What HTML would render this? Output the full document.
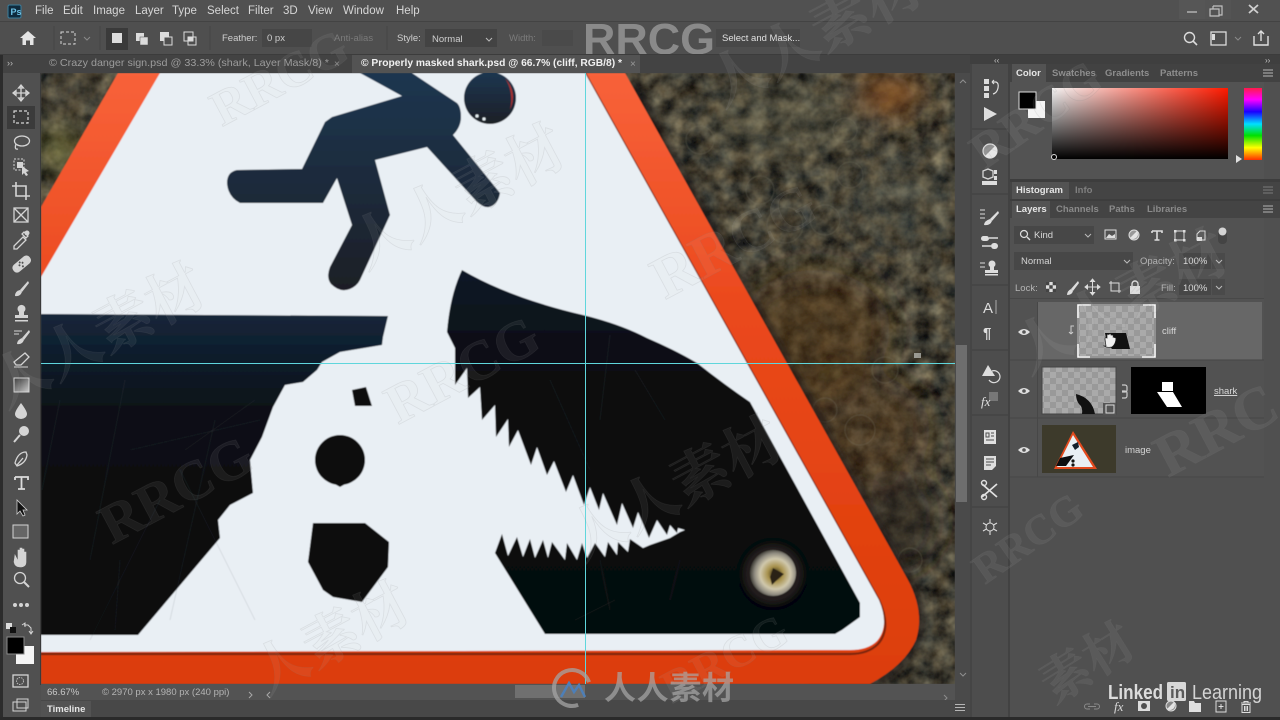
<!DOCTYPE html>
<html><head><meta charset="utf-8"><title>Photoshop</title>
<style>
html,body{margin:0;padding:0;background:#4f4f4f;width:1280px;height:720px;overflow:hidden}
svg{display:block}
text{font-family:"Liberation Sans","Noto Sans CJK SC",sans-serif}
.m{font-size:11.5px;fill:#d6d6d6}
.o{font-size:9.5px;fill:#cfcfcf}
.d{font-size:9.5px;fill:#7b7b7b}
.t{font-size:9.5px;fill:#9c9c9c}
.a{font-size:9.5px;fill:#e6e6e6;font-weight:bold}
.wm{font-family:"Liberation Serif","Noto Serif CJK SC",serif;font-weight:bold;fill:#dedede;fill-opacity:.07;stroke:#808080;stroke-opacity:.14;stroke-width:.8}
.ic{fill:none;stroke:#d4d4d4;stroke-width:1.3}
.f{fill:#d4d4d4}
</style></head><body>
<svg width="1280" height="720" viewBox="0 0 1280 720" xmlns="http://www.w3.org/2000/svg">
<defs>
<filter id="rust" x="0" y="0" width="100%" height="100%" color-interpolation-filters="sRGB">
<feTurbulence type="fractalNoise" baseFrequency=".06" numOctaves="4" seed="11"/>
<feColorMatrix values=".55 .2 0 0 -.1  .48 .24 0 0 -.1  .34 .24 0 0 -.08  0 0 0 0 1"/>
</filter>
<filter id="b8"><feGaussianBlur stdDeviation="14"/></filter>
<filter id="b3"><feGaussianBlur stdDeviation="3"/></filter>
<filter id="b04"><feGaussianBlur stdDeviation=".45"/></filter>
<linearGradient id="org" x1="0" y1="0" x2="0" y2="1"><stop offset="0" stop-color="#f8623a"/><stop offset=".4" stop-color="#ea481c"/><stop offset="1" stop-color="#dc3e08"/></linearGradient>
<linearGradient id="nav" x1="0" y1="0" x2="0" y2="1"><stop offset="0" stop-color="#1d3650"/><stop offset=".55" stop-color="#1a2a3a"/><stop offset="1" stop-color="#1a1f26"/></linearGradient>
<linearGradient id="clf" x1="0" y1="0" x2="0" y2="1"><stop offset="0" stop-color="#14263a"/><stop offset=".15" stop-color="#0f1c2a"/><stop offset=".32" stop-color="#0a0f14"/><stop offset="1" stop-color="#07070a"/></linearGradient>
<linearGradient id="shk" x1="0" y1="0" x2="0" y2="1"><stop offset="0" stop-color="#0f1a27"/><stop offset=".3" stop-color="#090b10"/><stop offset="1" stop-color="#060709"/></linearGradient>
<linearGradient id="hx" x1="0" y1="0" x2="1" y2="0"><stop offset="0" stop-color="#f4f4f4"/><stop offset="1" stop-color="#ff1a00"/></linearGradient>
<linearGradient id="vx" x1="0" y1="0" x2="0" y2="1"><stop offset="0" stop-color="#000" stop-opacity="0"/><stop offset="1" stop-color="#000"/></linearGradient>
<linearGradient id="hue" x1="0" y1="0" x2="0" y2="1"><stop offset="0" stop-color="#ff1a4a"/><stop offset=".16" stop-color="#ff00ff"/><stop offset=".33" stop-color="#1a00ff"/><stop offset=".5" stop-color="#00e0ff"/><stop offset=".66" stop-color="#00e000"/><stop offset=".83" stop-color="#ffff00"/><stop offset="1" stop-color="#ff3000"/></linearGradient>
<linearGradient id="gradt" x1="0" y1="0" x2="1" y2="1"><stop offset="0" stop-color="#333"/><stop offset="1" stop-color="#ccc"/></linearGradient>
<radialGradient id="bolt" cx=".55" cy=".52" r=".55"><stop offset="0" stop-color="#2e260c"/><stop offset=".3" stop-color="#a8924e"/><stop offset=".6" stop-color="#d0c8ad"/><stop offset=".82" stop-color="#8f8b80"/><stop offset="1" stop-color="#3e3c36"/></radialGradient>
<pattern id="chk" width="12" height="12" patternUnits="userSpaceOnUse"><rect width="12" height="12" fill="#aaa"/><rect width="6" height="6" fill="#999"/><rect x="6" y="6" width="6" height="6" fill="#999"/></pattern>
<clipPath id="cv"><rect x="41" y="73" width="914" height="611"/></clipPath>
</defs>

<!-- base -->
<rect width="1280" height="720" fill="#505050"/>

<!-- CANVAS -->
<g clip-path="url(#cv)">
<g filter="url(#b04)">
<rect x="41" y="73" width="914" height="611" fill="#474336"/>
<rect x="41" y="73" width="914" height="611" filter="url(#rust)"/>
<g filter="url(#b8)">
<ellipse cx="890" cy="95" rx="32" ry="20" fill="#8a4f1f" opacity=".85"/>
<ellipse cx="815" cy="330" rx="75" ry="60" fill="#54361a" opacity=".55"/>
<ellipse cx="850" cy="430" rx="80" ry="60" fill="#54361a" opacity=".45"/>
<ellipse cx="790" cy="120" rx="80" ry="40" fill="#6a6a58" opacity=".25"/>
<ellipse cx="900" cy="200" rx="50" ry="40" fill="#65675c" opacity=".25"/>
<ellipse cx="900" cy="520" rx="40" ry="50" fill="#2e2a22" opacity=".6"/>
<ellipse cx="60" cy="150" rx="18" ry="22" fill="#77743a" opacity=".8"/>
<ellipse cx="70" cy="90" rx="25" ry="14" fill="#5a5240" opacity=".6"/>
</g>
<g fill="none" stroke="#7b7866" stroke-width="1" opacity=".3">
<circle cx="785" cy="225" r="18"/><circle cx="825" cy="220" r="15"/><circle cx="760" cy="190" r="14"/><circle cx="850" cy="175" r="13"/><circle cx="700" cy="140" r="14"/><circle cx="860" cy="430" r="15"/><circle cx="885" cy="370" r="13"/><circle cx="825" cy="410" r="12"/><circle cx="910" cy="560" r="12"/><circle cx="845" cy="130" r="12"/>
</g>
<!-- sign shadow -->
<path d="M632,73 L915,580 Q932,612 922,640 Q910,668 875,690 L800,690 L900,600 L625,110Z" fill="#1a1712" opacity=".55" filter="url(#b3)"/>
<!-- orange -->
<path d="M625,73 L908,580 Q925,612 916,640 Q905,665 870,684 L41,684 L41,207 L118,73Z" fill="url(#org)"/>
<!-- inner dark edge -->
<path d="M585,73 L879,600 Q892,628 878,644 Q868,654 850,654 L41,654" fill="none" stroke="#3a1408" stroke-width="2.2" opacity=".6"/>
<!-- white -->
<path d="M160,73 L585,73 L879,600 Q890,626 877,641 Q868,650 850,650 L41,652 L41,277Z" fill="#e9eff4"/>
<!-- head -->
<circle cx="490" cy="98" r="26" fill="url(#nav)"/>
<path d="M505,78 Q518,92 510,110 Q514,92 505,78Z" fill="#a83030"/>
<circle cx="477" cy="116" r="1.6" fill="#e6eef2"/><circle cx="484" cy="119" r="1.6" fill="#e6eef2"/>
<!-- figure -->
<path d="M360,73 L402,96 L332,117 L325,122 L302,169 L237,170 Q227,172 227,183 Q228,197 240,203 L323,203 L337,178 L352,225 L330,267 Q326,278 331,284 Q340,293 350,289 Q357,286 360,280 L390,215 L375,160 L427,147 L477,202 Q484,208 489,207 Q498,205 500,193 L453,135 Q461,127 461,117 Q461,107 457,103 L412,73Z" fill="url(#nav)"/>
<!-- cliff -->
<path d="M41,314 L388,316 L383,337 L382,345 L340,352 L322,362 L317,370 L303,382 L285,385 L273,407 L262,437 L250,460 L253,493 L230,505 L218,520 L220,538 L138,635 L41,635Z" fill="url(#clf)"/>
<g stroke="#5a5f63" stroke-width=".5" fill="none" opacity=".3">
<path d="M60,400 L42,490M125,380 L90,560M130,450 L260,420M215,420 L170,620M160,500 L90,640M255,400 L185,450M180,470 L255,620M120,560 L115,630"/>
</g>
<!-- rocks -->
<path d="M352,390 L366,387 L372,406 L355,406Z" fill="#0a0a0c"/>
<circle cx="340" cy="460" r="25" fill="#0a0a0c"/><path d="M324,478 L340,487 L356,478Z" fill="#0a0a0c"/>
<path d="M313,523 L365,523 L389,542 L388,567 L362,602 L333,597 L323,590 L308,562Z" fill="#0a0a0c"/>
<!-- shark -->
<path d="M462,270 Q510,298 583,315 Q620,324 647,338 Q675,350 697,363 Q725,385 750,402 L860,603 L860,617 L842,630 L835,634 L545,634 L495,553 L502,534 L508,556 L517,537 L523,557 L530,539 L535,558 L543,540 L548,558 L552,542 L565,560 L567,543 L577,560 L582,543 L587,558 L595,543 L605,557 L608,542 L617,555 L618,542 L628,552 L630,539 L643,548 L650,545 L670,538 L680,532 L685,530 L678,528 L677,533 L670,525 L667,535 L657,520 L649,538 L638,512 L633,528 L622,503 L617,525 L603,493 L599,510 L590,487 L584,505 L573,475 L566,492 L554,461 L547,475 L537,447 L531,465 L518,430 L509,447 L508,419 L496,437 L495,405 L482,420 L480,387 L468,398 L467,368 L455,385 L455,348 L447,332 Q450,295 462,270Z" fill="url(#shk)"/>
<g stroke="#5a5f63" stroke-width=".5" fill="none" opacity=".3">
<path d="M635,370 L665,420M610,335 L600,420M550,380 L590,470M615,600 L575,620M680,560 L670,600M600,560 L610,610"/>
</g>
<!-- bolt -->
<circle cx="773" cy="574" r="30" fill="#25241f" opacity=".9" filter="url(#b3)"/>
<circle cx="773" cy="573" r="23" fill="url(#bolt)"/>
<path d="M773,568 L784,574 L776,581 L772,585 L770,577Z" fill="#2a2418"/>
</g>
<!-- guides -->
<path d="M585.5,73V684M41,363.5H955" stroke="#5fd6dc" stroke-width="1"/>
<rect x="914" y="353" width="7" height="5" fill="#d8dcd8" opacity=".6"/>
</g>

<!-- MENU BAR -->
<rect x="0" y="0" width="1280" height="21" fill="#515151"/>
<rect x="0" y="21" width="1280" height="1" fill="#434343"/>
<rect x="8" y="5" width="13" height="13" rx="1.5" fill="#0e2a3d" stroke="#3b7d9c"/>
<text x="10.5" y="15" style="font-size:9px;font-weight:bold;fill:#6cc3e8">Ps</text>
<text class="m" x="35" y="14">File</text><text class="m" x="63" y="14">Edit</text><text class="m" x="93" y="14">Image</text><text class="m" x="135" y="14">Layer</text><text class="m" x="172" y="14">Type</text><text class="m" x="207" y="14">Select</text><text class="m" x="248" y="14">Filter</text><text class="m" x="283" y="14">3D</text><text class="m" x="308" y="14">View</text><text class="m" x="343" y="14">Window</text><text class="m" x="396" y="14">Help</text>
<rect x="1179" y="0" width="26" height="19" fill="#565656"/><rect x="1205" y="0" width="26" height="19" fill="#545454"/>
<rect x="1187" y="11" width="10" height="2" fill="#9a9a9a"/>
<path d="M1213,6h9v9h-3M1213,6v3M1210,9h9v7h-9z" fill="none" stroke="#c0c0c0" stroke-width="1.2"/>
<path d="M1249,5 L1258,13M1258,5 L1249,13" stroke="#cfcfcf" stroke-width="1.8"/>

<!-- OPTIONS BAR -->
<rect x="0" y="22" width="1280" height="33" fill="#4f4f4f"/>
<path d="M28,31 L36,38 L33.5,38 L33.5,45 L30,45 L30,40.5 L26,40.5 L26,45 L22.5,45 L22.5,38 L20,38Z" fill="#e4e4e4"/>
<path d="M54,26v24M100,26v24" stroke="#444" stroke-width="1"/>
<rect x="61" y="32" width="14" height="12" fill="none" stroke="#d4d4d4" stroke-dasharray="3 2"/>
<path d="M84,37l3,3 3,-3" fill="none" stroke="#8a8a8a"/>
<rect x="106" y="28" width="22" height="22" fill="#3a3a3a"/>
<rect x="112" y="33" width="10" height="10" fill="#dcdcdc"/>
<rect x="136" y="33" width="8" height="8" fill="#dcdcdc"/><rect x="140" y="37" width="8" height="8" fill="#dcdcdc" stroke="#4f4f4f" stroke-width=".5"/>
<rect x="160" y="32" width="9" height="9" fill="#dcdcdc"/><rect x="164" y="37" width="8" height="8" fill="#4f4f4f" stroke="#dcdcdc"/>
<rect x="184" y="32" width="9" height="9" fill="none" stroke="#dcdcdc"/><rect x="188" y="37" width="8" height="8" fill="none" stroke="#dcdcdc"/><rect x="188" y="37" width="5" height="4" fill="#dcdcdc"/>
<path d="M210,26v24" stroke="#444"/>
<text class="o" x="222" y="41">Feather:</text>
<rect x="262" y="29" width="50" height="18" fill="#464646"/><text class="o" x="267" y="41">0 px</text>
<text class="d" x="334" y="41">Anti-alias</text>
<path d="M387,26v24" stroke="#444"/>
<text class="o" x="397" y="41">Style:</text>
<rect x="425" y="29" width="72" height="18" fill="#434343"/><text class="o" x="432" y="42">Normal</text>
<path d="M486,38l3,3 3,-3" fill="none" stroke="#bbb"/>
<text class="d" x="509" y="41">Width:</text><rect x="542" y="30" width="31" height="16" fill="#4a4a4a"/>
<text x="583" y="54" style="font-size:44px;font-weight:bold;fill:#8a8a8a" textLength="132" lengthAdjust="spacingAndGlyphs">RRCG</text>
<rect x="716" y="29" width="84" height="18" fill="#484848"/><text x="722" y="41" style="font-size:9.5px;fill:#e0e0e0">Select and Mask...</text>
<circle cx="1189.5" cy="37.5" r="5" fill="none" stroke="#dcdcdc" stroke-width="1.4"/><path d="M1193,41l4,4" stroke="#dcdcdc" stroke-width="1.6"/>
<rect x="1211" y="32" width="15" height="13" fill="none" stroke="#dcdcdc" stroke-width="1.3"/><rect x="1212" y="34" width="3" height="6" fill="#dcdcdc"/>
<path d="M1235,37l3,3 3,-3" fill="none" stroke="#8a8a8a"/>
<path d="M1254,36v9h14v-9M1261,31v10M1258,34l3,-3 3,3" fill="none" stroke="#e0e0e0" stroke-width="1.4"/>

<!-- TAB BAR -->
<rect x="0" y="55" width="970" height="18" fill="#434343"/>
<rect x="0" y="54" width="1280" height="1" fill="#3c3c3c"/>
<text x="7" y="66" style="font-size:9px;fill:#bbb">››</text>
<text class="t" x="49" y="66" style="font-size:10.2px" textLength="280" lengthAdjust="spacingAndGlyphs">© Crazy danger sign.psd @ 33.3% (shark, Layer Mask/8) *</text>
<text x="334" y="67" style="font-size:10px;fill:#8f8f8f">×</text>
<rect x="352" y="55" width="288" height="18" fill="#535353"/>
<text x="361" y="66" style="font-size:10.2px;fill:#f0f0f0;font-weight:bold" textLength="261" lengthAdjust="spacingAndGlyphs">© Properly masked shark.psd @ 66.7% (cliff, RGB/8) *</text>
<text x="630" y="67" style="font-size:10px;fill:#9a9a9a">×</text>

<!-- LEFT TOOLBAR -->
<rect x="0" y="73" width="41" height="647" fill="#505050"/>
<rect x="0" y="55" width="3" height="665" fill="#2c2c2c"/>
<rect x="40" y="73" width="1" height="612" fill="#3a3a3a"/>
<rect x="7" y="106" width="28" height="23" fill="#3b3b3b"/>
<!-- move -->
<path d="M21,86v14M14,93h14M21,85l-2.5,3h5zM21,101l-2.5,-3h5zM13,93l3,-2.5v5zM29,93l-3,-2.5v5z" class="ic" fill="#d4d4d4"/>
<rect x="14" y="111" width="14" height="12" fill="none" stroke="#d4d4d4" stroke-dasharray="3 2" stroke-width="1.2"/>
<ellipse cx="22" cy="141" rx="7.5" ry="5" class="ic"/><path d="M16,144 Q14,150 18,149" class="ic"/>
<rect x="14" y="159" width="10" height="11" fill="none" stroke="#d4d4d4" stroke-dasharray="2 1.5"/><rect x="17" y="162" width="6" height="6" class="f"/><path d="M22,166l7,5-3,1 2,3-2,1-2,-3-2,2z" class="f"/>
<path d="M16,182v14h14M12,186h14v14" fill="none" stroke="#d4d4d4" stroke-width="1.6"/>
<rect x="14" y="208" width="14" height="14" class="ic"/><path d="M14,208l14,14M28,208l-14,14" class="ic"/>
<path d="M14,246l9,-9 3,3-9,9h-3zM24,232l4,4-2,2-4,-4z" class="ic"/><circle cx="27" cy="233" r="2.5" class="f"/>
<g transform="rotate(-40 21 264)"><rect x="11" y="260" width="21" height="9" rx="4" class="f"/><circle cx="19" cy="264" r="1" fill="#505050"/><circle cx="23" cy="264" r="1" fill="#505050"/><circle cx="21" cy="262" r="1" fill="#505050"/><circle cx="21" cy="267" r="1" fill="#505050"/></g>
<path d="M28,281 L20,290 L22,292 L29,283Z" class="f"/><path d="M20,290 Q15,291 15,296 Q20,297 22,292Z" class="f"/>
<path d="M15,318h13v-3h-4v-3 a4,4 0 1 0 -5,0 v3h-4zM15,320h13v1.5h-13z" class="f"/>
<path d="M14,331h8M14,334h5" stroke="#d4d4d4"/><path d="M29,330 L22,338 L24,340 L30,332Z" class="f"/><path d="M22,338 Q17,340 17,344 Q22,345 24,340Z" class="f"/>
<path d="M25,353 L29,357 L21,365 H16 L14,362Z" class="ic"/><path d="M14,367h14" stroke="#d4d4d4"/>
<rect x="14" y="378" width="15" height="14" fill="url(#gradt)" stroke="#d4d4d4"/>
<path d="M21,403 Q15,411 15,414 a6,5 0 0 0 12,0 Q27,411 21,403Z" class="f"/>
<circle cx="24" cy="431" r="5" class="f"/><path d="M20,435l-6,7" stroke="#d4d4d4" stroke-width="2"/>
<path d="M26,452 Q18,452 15,463 L17,466 Q26,463 27,455Z" class="ic"/><path d="M17,465l6,-7" class="ic"/>
<path d="M15,477h13v3M21.5,477v12M18,489h7M15,477v3" fill="none" stroke="#dcdcdc" stroke-width="1.8"/>
<path d="M17,500 L17,514 L20,511 L23,516 L25,515 L23,510 L27,510Z" fill="#111" stroke="#cfcfcf" stroke-width=".8"/>
<rect x="13" y="525" width="15" height="13" fill="#666" stroke="#d4d4d4"/>
<path d="M15,555 l3,6 v-11 h2 v8 v-10 h2 v10 v-9 h2 v10 v-7 h2 v10 q0,5 -6,5 q-5,0 -6,-5z" class="f" stroke="#d4d4d4" stroke-width=".6"/>
<circle cx="20" cy="578" r="5.5" class="ic"/><path d="M24,582l5,5" stroke="#d4d4d4" stroke-width="2"/>
<circle cx="15" cy="605" r="2" class="f"/><circle cx="21" cy="605" r="2" class="f"/><circle cx="27" cy="605" r="2" class="f"/>
<rect x="6" y="623" width="6" height="6" fill="#ddd"/><rect x="10" y="627" width="6" height="6" fill="#111"/>
<path d="M24,625h4l3,3v5M22,625l3,-2v4M29,631l2,3 2,-3" fill="none" stroke="#d4d4d4"/>
<rect x="16" y="646" width="18" height="18" fill="#f5f5f5"/>
<rect x="7" y="637" width="17" height="17" fill="#000" stroke="#8a8a8a" stroke-width="1"/>
<rect x="13" y="675" width="15" height="12" class="ic" stroke="#aaa"/><circle cx="20" cy="681" r="3.5" fill="none" stroke="#bbb" stroke-dasharray="1.5 1"/>
<rect x="13" y="702" width="13" height="9" fill="#505050" stroke="#d4d4d4"/><rect x="17" y="699" width="11" height="9" fill="none" stroke="#d4d4d4"/>

<!-- STATUS -->
<rect x="41" y="684" width="914" height="16" fill="#535353"/>
<text class="t" x="47" y="695" style="fill:#c8c8c8;font-size:9.5px">66.67%</text>
<text class="t" x="102" y="695" style="fill:#b4b4b4;font-size:9.5px">© 2970 px x 1980 px (240 ppi)</text>
<path d="M249,692l3,3-3,3M270,692l-3,3 3,3" fill="none" stroke="#a8a8a8"/>
<rect x="515" y="685" width="70" height="13" fill="#707070"/>
<path d="M944,695l3,3-3,3" fill="none" stroke="#8c8c8c"/>
<rect x="41" y="700" width="929" height="17" fill="#484848"/>
<rect x="41" y="701" width="50" height="16" fill="#535353"/>
<text x="47" y="712" style="font-size:9.5px;font-weight:bold;fill:#e6e6e6">Timeline</text>
<path d="M955,704.5h10M955,707.5h10M955,710.5h10" stroke="#b5b5b5"/>
<rect x="0" y="717" width="1280" height="3" fill="#2a2a2a"/>

<!-- RIGHT SCROLLBAR -->
<rect x="955" y="73" width="15" height="627" fill="#4a4a4a"/>
<rect x="956" y="345" width="11" height="157" fill="#6e6e6e"/>
<path d="M960,83l3,-3 3,3M960,673l3,3 3,-3" fill="none" stroke="#8f8f8f"/>

<!-- DOCK -->
<rect x="970" y="55" width="310" height="9" fill="#3f3f3f"/>
<text x="994" y="63" style="font-size:8px;fill:#c8c8c8">‹‹</text><text x="1265" y="63" style="font-size:8px;fill:#c8c8c8">››</text>
<rect x="970" y="64" width="40" height="653" fill="#4d4d4d"/>
<rect x="970" y="64" width="2" height="653" fill="#454545"/>
<rect x="1008" y="64" width="2" height="653" fill="#424242"/>
<path d="M972,129h36M972,194h36M972,285h36M972,350h36M972,415h36M972,507h36" stroke="#3e3e3e"/>
<rect x="984" y="79" width="5" height="5" fill="#ddd"/><rect x="984" y="86" width="5" height="5" fill="#ddd"/><rect x="984" y="93" width="5" height="5" fill="#ddd"/>
<path d="M992,82h4q3,1 2,6q-1,5-5,6M992,82l2,-2M992,82l2,2" fill="none" stroke="#ddd" stroke-width="1.2"/>
<path d="M984,107 L997,114 L984,121Z" fill="#dedede"/>
<circle cx="990" cy="151" r="7" fill="#8f8f8f" stroke="#ddd" stroke-width="1.2"/><path d="M985,156 L995,146 A7,7 0 0 1 985,156Z" fill="#e6e6e6"/>
<path d="M983,171l5,-2 5,2v6l-5,2-5,-2z" class="ic" stroke="#ddd"/><rect x="994" y="170" width="3" height="4" fill="#ddd"/><rect x="994" y="176" width="3" height="4" fill="#ddd"/><rect x="982" y="181" width="15" height="4" fill="#ddd"/>
<path d="M980,210h5M980,214h5M980,218h5" stroke="#ddd"/><path d="M998,211 L990,219 L992,221 L999,213Z" fill="#ddd"/><path d="M990,219 Q984,221 984,225 Q990,226 992,221Z" fill="#ddd"/>
<rect x="981" y="236" width="8" height="5" rx="2.5" fill="#ddd"/><path d="M989,238h9M982,246h9" stroke="#ddd" stroke-width="1.5"/><rect x="991" y="243" width="7" height="6" rx="3" fill="#ddd"/>
<path d="M980,263h5M980,267h5" stroke="#ddd"/><circle cx="992" cy="264" r="3.5" fill="#ddd"/><rect x="985" y="270" width="13" height="3" fill="#ddd"/><rect x="990" y="266" width="4" height="5" fill="#ddd"/><rect x="985" y="274" width="13" height="1.5" fill="#ddd"/>
<text x="983" y="313" style="font-size:15px;fill:#dedede">A</text><path d="M996,300v14" stroke="#aaa"/>
<text x="983" y="338" style="font-size:15px;fill:#dedede;font-weight:bold">¶</text>
<path d="M988,365 L995,376 H982Z" fill="#ddd"/><path d="M992,371 a6,6 0 1 1 -3,9" fill="none" stroke="#ddd" stroke-width="1.2"/>
<rect x="989" y="392" width="9" height="9" fill="#777"/>
<text x="981" y="406" style="font-size:13px;font-style:italic;fill:#e0e0e0;font-family:'Liberation Serif',serif">fx</text>
<rect x="984" y="430" width="12" height="14" fill="#e0e0e0"/><path d="M986,433h3v4h-3zM991,433h3M991,436h3M986,440h8" stroke="#4d4d4d" fill="none"/>
<path d="M984,456h12v10l-4,4h-8z" fill="#ddd"/><path d="M986,459h8M986,462h8M986,465h5" stroke="#4d4d4d"/>
<path d="M982,484l15,13M997,484l-15,13" stroke="#e0e0e0" stroke-width="1.7"/><circle cx="984" cy="483" r="2.5" fill="none" stroke="#e0e0e0" stroke-width="1.4"/><circle cx="984" cy="497" r="2.5" fill="none" stroke="#e0e0e0" stroke-width="1.4"/>
<path d="M990,519v16M983,523l14,8M997,523l-14,8" stroke="#ddd" stroke-width="1.1"/><circle cx="990" cy="527" r="4" fill="#4d4d4d" stroke="#ddd"/>

<!-- PANELS -->
<rect x="1010" y="64" width="270" height="653" fill="#505050"/>
<rect x="1010" y="64" width="254" height="115" fill="#535353"/>
<rect x="1010" y="64" width="270" height="18" fill="#424242"/>
<rect x="1012" y="64" width="34" height="18" fill="#535353"/>
<text class="a" x="1016" y="76">Color</text>
<text class="t" x="1052" y="76" style="font-weight:bold;fill:#8e8e8e">Swatches</text><text class="t" x="1105" y="76" style="font-weight:bold;fill:#8e8e8e">Gradients</text><text class="t" x="1160" y="76" style="font-weight:bold;fill:#8e8e8e">Patterns</text>
<path d="M1263,70h10M1263,73h10M1263,76h10" stroke="#b5b5b5"/>
<rect x="1028" y="101" width="17" height="17" fill="#f5f5f5"/>
<rect x="1019" y="92" width="17" height="17" fill="#000" stroke="#ddd" stroke-width="1"/>
<rect x="1052" y="88" width="176" height="71" fill="url(#hx)"/>
<rect x="1052" y="88" width="176" height="71" fill="url(#vx)"/>
<circle cx="1054" cy="157" r="2.5" fill="none" stroke="#ddd"/>
<rect x="1244" y="88" width="18" height="72" fill="url(#hue)"/>
<path d="M1236,155l6,4-6,4z" fill="#e0e0e0"/>
<rect x="1010" y="179" width="270" height="3" fill="#3d3d3d"/>
<rect x="1010" y="182" width="270" height="17" fill="#444"/>
<rect x="1012" y="182" width="57" height="17" fill="#535353"/>
<text class="a" x="1016" y="193">Histogram</text><text class="t" x="1075" y="193" style="font-weight:bold;fill:#7f7f7f">Info</text>
<path d="M1263,187h10M1263,190h10M1263,193h10" stroke="#7a7a7a"/>
<rect x="1010" y="199" width="270" height="2" fill="#3d3d3d"/>
<rect x="1010" y="201" width="270" height="17" fill="#444"/>
<rect x="1012" y="201" width="38" height="17" fill="#535353"/>
<text class="a" x="1016" y="212">Layers</text>
<text class="t" x="1056" y="212" style="font-weight:bold;fill:#8a8a8a">Channels</text><text class="t" x="1109" y="212" style="font-weight:bold;fill:#8a8a8a">Paths</text><text class="t" x="1147" y="212" style="font-weight:bold;fill:#8a8a8a">Libraries</text>
<path d="M1263,206h10M1263,209h10M1263,212h10" stroke="#b5b5b5"/>
<rect x="1010" y="218" width="254" height="260" fill="#525252"/>
<!-- kind -->
<rect x="1014" y="226" width="80" height="18" fill="#474747"/>
<circle cx="1024" cy="234" r="3.5" fill="none" stroke="#ddd" stroke-width="1.2"/><path d="M1027,237l3,3" stroke="#ddd" stroke-width="1.4"/>
<text class="o" x="1034" y="238" style="fill:#d8d8d8">Kind</text>
<path d="M1085,234l3,3 3,-3" fill="none" stroke="#bbb"/>
<rect x="1105" y="230" width="11" height="9" fill="none" stroke="#ddd"/><path d="M1106,238l3,-4 3,2 3,-2v4z" fill="#ddd"/>
<circle cx="1134" cy="235" r="5" fill="#999" stroke="#ddd"/><path d="M1130,238 L1137,231 A5,5 0 0 1 1130,238Z" fill="#e4e4e4"/>
<path d="M1152,231h10v2M1157,231v9M1154.5,240h5M1152,231v2" fill="none" stroke="#ddd" stroke-width="1.6"/>
<rect x="1175" y="231" width="9" height="9" fill="none" stroke="#ddd"/><rect x="1174" y="230" width="2.5" height="2.5" fill="#ddd"/><rect x="1183" y="230" width="2.5" height="2.5" fill="#ddd"/><rect x="1174" y="239" width="2.5" height="2.5" fill="#ddd"/><rect x="1183" y="239" width="2.5" height="2.5" fill="#ddd"/>
<path d="M1200,231h5v9h-8v-6z" fill="none" stroke="#ddd"/><rect x="1197" y="237" width="5" height="4" fill="#ddd"/>
<rect x="1218" y="228" width="9" height="16" rx="4" fill="#444"/><circle cx="1222.5" cy="231.5" r="4" fill="#d4d4d4"/>
<!-- blend -->
<rect x="1014" y="252" width="119" height="18" fill="#474747"/>
<text class="o" x="1021" y="264" style="fill:#d4d4d4">Normal</text>
<path d="M1124,260l3,3 3,-3" fill="none" stroke="#bbb"/>
<text class="o" x="1140" y="264" style="fill:#b5b5b5">Opacity:</text>
<rect x="1179" y="253" width="32" height="16" fill="#474747"/><text class="o" x="1183" y="264" style="fill:#d8d8d8">100%</text>
<rect x="1212" y="253" width="13" height="16" fill="#4a4a4a"/><path d="M1216,260l3,3 3,-3" fill="none" stroke="#bbb"/>
<!-- lock -->
<text class="o" x="1015" y="291" style="fill:#b5b5b5">Lock:</text>
<rect x="1046" y="282" width="10" height="10" fill="#ddd"/><path d="M1046,282h3.3v3.3h-3.3zM1052.7,282h3.3v3.3h-3.3zM1049.3,285.3h3.4v3.4h-3.4zM1046,288.7h3.3v3.3h-3.3zM1052.7,288.7h3.3v3.3h-3.3z" fill="#444"/>
<path d="M1078,281 L1071,289 L1073,291 L1079,283Z" fill="#ddd"/><path d="M1071,289 Q1067,291 1067,295 Q1072,295 1073,291Z" fill="#ddd"/>
<path d="M1092.5,280v14M1086,287h13M1092.5,279l-2,2.5h4zM1092.5,295l-2,-2.5h4zM1085,287l2.5,-2v4zM1100,287l-2.5,-2v4z" stroke="#ddd" fill="#ddd" stroke-width="1"/>
<path d="M1109,283h10v10M1111,281v10h10" fill="none" stroke="#ddd"/>
<rect x="1130" y="286" width="10" height="8" fill="#ddd"/><path d="M1132,286v-2a3,3 0 0 1 6,0v2" fill="none" stroke="#ddd" stroke-width="1.4"/>
<text class="o" x="1161" y="291" style="fill:#b5b5b5">Fill:</text>
<rect x="1179" y="279" width="32" height="16" fill="#474747"/><text class="o" x="1183" y="291" style="fill:#d8d8d8">100%</text>
<rect x="1212" y="279" width="13" height="16" fill="#4a4a4a"/><path d="M1216,286l3,3 3,-3" fill="none" stroke="#bbb"/>

<!-- layer rows -->
<rect x="1010" y="298" width="254" height="1" fill="#484848"/>
<rect x="1038" y="302" width="224" height="58" fill="#676767"/>
<path d="M1010,360h254M1010,418h254M1010,477h254" stroke="#454545"/>
<rect x="1037" y="302" width="1" height="175" fill="#474747"/>
<path d="M1018,332 Q1024,326 1030,332 Q1024,338 1018,332Z" fill="#e0e0e0"/><circle cx="1024" cy="332" r="1.8" fill="#555"/>
<path d="M1018,391 Q1024,385 1030,391 Q1024,397 1018,391Z" fill="#e0e0e0"/><circle cx="1024" cy="391" r="1.8" fill="#555"/>
<path d="M1018,450 Q1024,444 1030,450 Q1024,456 1018,450Z" fill="#e0e0e0"/><circle cx="1024" cy="450" r="1.8" fill="#555"/>
<path d="M1074,326h-3v8M1071,334l-2,-2M1071,334l2,-2" fill="none" stroke="#ccc"/>
<!-- cliff thumb -->
<rect x="1079" y="306" width="75" height="50" fill="url(#chk)"/>
<path d="M1105,333 L1126,333 L1130,349 L1112,349 L1107,343Z" fill="#111"/>
<path d="M1078,318v-13h13M1143,305h12v13M1155,344v13h-13M1090,357h-12v-13" fill="none" stroke="#fff" stroke-width="1.6"/>
<path d="M1091,305h52M1078,318v26M1155,318v26M1090,357h52" fill="none" stroke="#ddd" stroke-width=".7"/>
<path d="M1106,346 l-1,-7 q0,-2 2,-1 v-3 q1,-2 2,0 v-1 q2,-1 2,1 l1,0 q2,0 1,2 l3,1 q0,6 -4,9 q-5,1 -8,-1z" fill="#f0f0f0" stroke="#222" stroke-width=".7"/>
<text x="1162" y="334" style="font-size:9.5px;fill:#d8d8d8">cliff</text>
<!-- shark row -->
<rect x="1042" y="367" width="74" height="47" fill="url(#chk)" stroke="#444"/>
<path d="M1076,394 Q1092,398 1095,414 L1082,414 Q1083,407 1079,404 Q1076,400 1076,394Z" fill="#111"/>
<rect x="1103" y="403" width="13" height="12" fill="#555"/><rect x="1106" y="405" width="8" height="8" fill="none" stroke="#ddd"/>
<path d="M1122,385h3a2,2 0 0 1 2,2v3a2,2 0 0 1 -2,2h-3M1122,391h3a2,2 0 0 1 2,2v3a2,2 0 0 1 -2,2h-3" fill="none" stroke="#ccc" stroke-width="1.2"/>
<rect x="1131" y="367" width="75" height="47" fill="#000"/>
<rect x="1162" y="382" width="11" height="9" fill="#fff"/><path d="M1157,392 L1173,392 L1182,407 L1167,407Z" fill="#fff"/>
<text x="1214" y="394" style="font-size:9.5px;fill:#d8d8d8;text-decoration:underline">shark</text>
<!-- image row -->
<rect x="1042" y="425" width="74" height="48" fill="#3d3a2b"/>
<path d="M1073,431 L1097,469 L1054,469Z" fill="#e34a1e"/><path d="M1073,435 L1093,467 L1057,467Z" fill="#e9eff4"/>
<path d="M1060,458 L1074,455 L1066,466 L1056,466Z" fill="#0b0d10"/><circle cx="1073" cy="461" r="1.6" fill="#111"/><circle cx="1073" cy="465" r="1.6" fill="#111"/><path d="M1072,445l6,-3 1,5-4,3z" fill="#14202c"/>
<text x="1125" y="453" style="font-size:9.5px;fill:#d4d4d4">image</text>

<!-- LinkedIn -->
<text x="1108" y="699" style="font-size:20px;font-weight:bold;fill:#dcdcdc" textLength="55" lengthAdjust="spacingAndGlyphs">Linked</text>
<rect x="1167" y="682" width="19" height="19" rx="1.5" fill="#d8d8d8"/>
<text x="1170" y="698" style="font-size:17px;font-weight:bold;fill:#5a5a5a">in</text>
<text x="1192" y="699" style="font-size:20px;fill:#d4d4d4" textLength="70" lengthAdjust="spacingAndGlyphs">Learning</text>
<!-- layer footer -->
<path d="M1090,704h-3a2.5,2.5 0 0 0 0,5h3M1094,704h3a2.5,2.5 0 0 1 0,5h-3M1088,706.5h8" fill="none" stroke="#8a8a8a"/>
<text x="1114" y="711" style="font-size:13px;font-style:italic;fill:#d8d8d8;font-family:'Liberation Serif',serif">fx</text>
<rect x="1138" y="701" width="12" height="10" fill="#ddd"/><circle cx="1144" cy="706" r="3" fill="#505050"/>
<circle cx="1171" cy="706" r="5" fill="#888" stroke="#ddd"/><path d="M1167,709 L1174,702 A5,5 0 0 1 1167,709Z" fill="#e4e4e4"/>
<path d="M1189,701h5l1,2h6v9h-12z" fill="#e0e0e0"/>
<rect x="1216" y="701" width="10" height="11" fill="none" stroke="#ddd"/><path d="M1221,704v5M1218.5,706.5h5" stroke="#ddd"/>
<path d="M1241,703h10M1244,703v-1.5h4v1.5M1242,704.5h8v8h-8zM1244.5,706v5M1246,706v5M1247.5,706v5" fill="none" stroke="#ddd"/>

<!-- WATERMARKS -->
<g>
<text class="wm" font-size="50" transform="translate(222,127) rotate(-28)">RRCG</text>
<text class="wm" font-size="56" transform="translate(398,425) rotate(-28)">RRCG</text>
<text class="wm" font-size="56" transform="translate(112,545) rotate(-28)">RRCG</text>
<text class="wm" font-size="60" transform="translate(665,300) rotate(-28)">RRCG</text>
<text class="wm" font-size="50" transform="translate(985,170) rotate(-35)">RRCG</text>
<text class="wm" font-size="60" transform="translate(1168,478) rotate(-28)">RRC</text>
<text class="wm" font-size="42" transform="translate(985,585) rotate(-35)">RRCG</text>
<text class="wm" font-size="46" transform="translate(672,704) rotate(-28)">RRCG</text>
<text class="wm" font-size="58" transform="translate(5,408) rotate(-28)">人人素材</text>
<text class="wm" font-size="58" transform="translate(365,269) rotate(-28)">人人素材</text>
<text class="wm" font-size="56" transform="translate(266,695) rotate(-28)">人素材</text>
<text class="wm" font-size="58" transform="translate(582,561) rotate(-28)">人人素材</text>
<text class="wm" font-size="50" transform="translate(1054,704) rotate(-32)">素材</text>
<text class="wm" font-size="58" transform="translate(722,107) rotate(-28)">人人素材</text>
<text class="wm" font-size="58" transform="translate(1028,374) rotate(-28)">人人素材</text>
</g>
<!-- bottom logo -->
<circle cx="572" cy="688" r="18" fill="none" stroke="#a4a4a4" stroke-width="4" stroke-dasharray="85 30" opacity=".75" transform="rotate(70 572 688)"/>
<path d="M561,697 L569,683 L574,692 L579,685 L585,697" fill="none" stroke="#4d7fb8" stroke-width="2.5"/>
<text x="604" y="699" style="font-size:32px;font-weight:bold;fill:#a8a8a8;fill-opacity:.7" textLength="130" lengthAdjust="spacing">人人素材</text>
</svg>
</body></html>
